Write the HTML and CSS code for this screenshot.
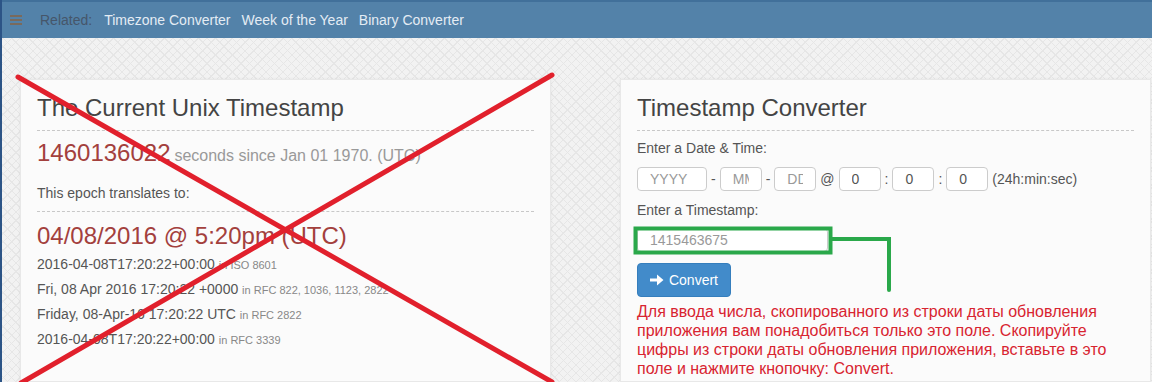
FILE: index.html
```html
<!DOCTYPE html>
<html lang="en">
<head>
    <meta charset="UTF-8">
    <title>Epoch Converter</title>
    <link rel="stylesheet" href="styles.css">
</head>
<body>
<div class="page">
    <div class="topbar">
        <svg class="burger" width="12" height="10" viewBox="0 0 12 10"><rect y="0" width="12" height="2"/><rect y="4" width="12" height="2"/><rect y="8" width="12" height="2"/></svg>
        <span class="related">Related:</span>
        <a href="#">Timezone Converter</a>
        <a href="#">Week of the Year</a>
        <a href="#">Binary Converter</a>
    </div>

    <div class="columns">
        <div class="card">
            <h2 class="card-head">The Current Unix Timestamp</h2>
            <div class="now"><span class="big">1460136022</span> <span class="since">seconds since Jan 01 1970. (UTC)</span></div>
            <p class="translates">This epoch translates to:</p>
            <div class="big human">04/08/2016 @ 5:20pm (UTC)</div>
            <ul class="formats">
                <li>2016-04-08T17:20:22+00:00 <small>in ISO 8601</small></li>
                <li>Fri, 08 Apr 2016 17:20:22 +0000 <small>in RFC 822, 1036, 1123, 2822</small></li>
                <li>Friday, 08-Apr-16 17:20:22 UTC <small>in RFC 2822</small></li>
                <li>2016-04-08T17:20:22+00:00 <small>in RFC 3339</small></li>
            </ul>
        </div>

        <div class="card">
            <h2 class="card-head">Timestamp Converter</h2>
            <p class="label">Enter a Date &amp; Time:</p>
            <div class="date-row">
                <input class="w-year" placeholder="YYYY">
                <span>-</span>
                <input class="w-small" placeholder="MM">
                <span>-</span>
                <input class="w-small" placeholder="DD">
                <span>@</span>
                <input class="w-time" value="0">
                <span>:</span>
                <input class="w-time" value="0">
                <span>:</span>
                <input class="w-time" value="0">
                <span>(24h:min:sec)</span>
            </div>
            <p class="label second">Enter a Timestamp:</p>
            <input class="stamp" placeholder="1415463675">
            <button class="convert">
                <svg width="14" height="12" viewBox="0 0 14 12"><path d="M0 4.5h7V0.5l6.5 5.5L7 11.5V7.5H0z" fill="#fff"/></svg>
                Convert
            </button>
            <p class="note">Для ввода числа, скопированного из строки даты обновления приложения вам понадобиться только это поле. Скопируйте цифры из строки даты обновления приложения, вставьте в это поле и нажмите кнопочку: Convert.</p>
        </div>
    </div>

    <!-- annotations drawn over the screenshot -->
    <svg class="marks" width="1152" height="382" viewBox="0 0 1152 382">
        <line x1="18" y1="77" x2="552" y2="382" stroke="#e1202c" stroke-width="5" stroke-linecap="round"/>
        <line x1="552" y1="75" x2="21" y2="383" stroke="#e1202c" stroke-width="5" stroke-linecap="round"/>
        <rect x="635.5" y="228.5" width="195" height="24" fill="none" stroke="#2aa84a" stroke-width="4"/>
        <path d="M832 239H889V290" fill="none" stroke="#2aa84a" stroke-width="4" stroke-linecap="round"/>
    </svg>
</div>
</body>
</html>
```

FILE: styles.css
```css
html, body {
    margin: 0;
    height: 100%;
}
body {
    font-family: "Liberation Sans", Arial, sans-serif;
    font-size: 14px;
    color: #555;
    overflow: hidden;
    background-color: #f2f2f2;
    background-image:
        repeating-linear-gradient(45deg, transparent 0 5px, #e6e6e6 5px 6px),
        repeating-linear-gradient(-45deg, transparent 0 5px, #e6e6e6 5px 6px);
}
.page {
    position: relative;
    height: 100%;
    border-left: 2px solid #2c5486;
}
.topbar {
    height: 36px;
    background: #5382a9;
    border-top: 2px solid #41709a;
    display: flex;
    align-items: center;
    padding-left: 8px;
    gap: 11px;
}
.burger {
    fill: #7a6a5c;
    margin-right: 7px;
}
.related {
    color: #46566a;
    margin-right: 1px;
}
.topbar a {
    color: #e4ecf4;
    text-decoration: none;
}
.columns {
    display: grid;
    grid-template-columns: 531px 531px;
    gap: 69px;
    padding-left: 18px;
    margin-top: 41px;
}
.card {
    background: #fbfbfb;
    border: 1px solid #e8e8e8;
    box-shadow: 0 0 3px rgba(0, 0, 0, 0.06);
    padding: 0 16px 3px;
}
.card-head {
    font-size: 24px;
    font-weight: normal;
    line-height: 26px;
    color: #444;
    margin: 15px 0 0;
    padding-bottom: 9px;
    border-bottom: 1px dashed #c8c8c8;
}
.big {
    font-size: 24px;
    line-height: 26px;
    color: #a3403d;
}
.now {
    margin-top: 9px;
    line-height: 26px;
}
.since {
    font-size: 16px;
    color: #999;
}
.translates {
    margin: 14px 0 0;
    line-height: 20px;
    padding-bottom: 8px;
    border-bottom: 1px dashed #c8c8c8;
}
.human {
    margin-top: 11px;
}
.formats {
    list-style: none;
    margin: 5px 0 0;
    padding: 0;
}
.formats li {
    line-height: 20px;
    margin-bottom: 5px;
}
.formats small {
    font-size: 11px;
    line-height: 1;
    color: #888;
}
.label {
    margin: 7px 0 0;
    line-height: 20px;
}
.label.second {
    margin-top: 9px;
}
.date-row {
    display: flex;
    align-items: center;
    gap: 4px;
    margin-top: 9px;
}
input {
    box-sizing: border-box;
    height: 24px;
    border: 1px solid #ccc;
    border-radius: 4px;
    background: #fff;
    font-family: inherit;
    font-size: 14px;
    color: #555;
    padding: 0 12px;
    outline: none;
}
input::placeholder {
    color: #999;
}
.w-year { width: 70px; }
.w-small { width: 42px; }
.w-time { width: 42px; }
.stamp {
    display: block;
    width: 191px;
    margin-top: 8px;
}
.convert {
    display: flex;
    align-items: center;
    gap: 5px;
    margin-top: 11px;
    height: 34px;
    width: 94px;
    padding: 0 12px;
    border: 1px solid #357ebd;
    border-radius: 4px;
    background: #428bca;
    color: #fff;
    font-family: inherit;
    font-size: 14px;
}
.note {
    margin: 5px 0 0;
    font-size: 16px;
    line-height: 19px;
    color: #d82430;
}
.marks {
    position: absolute;
    left: -2px;
    top: 0;
    pointer-events: none;
}
```
